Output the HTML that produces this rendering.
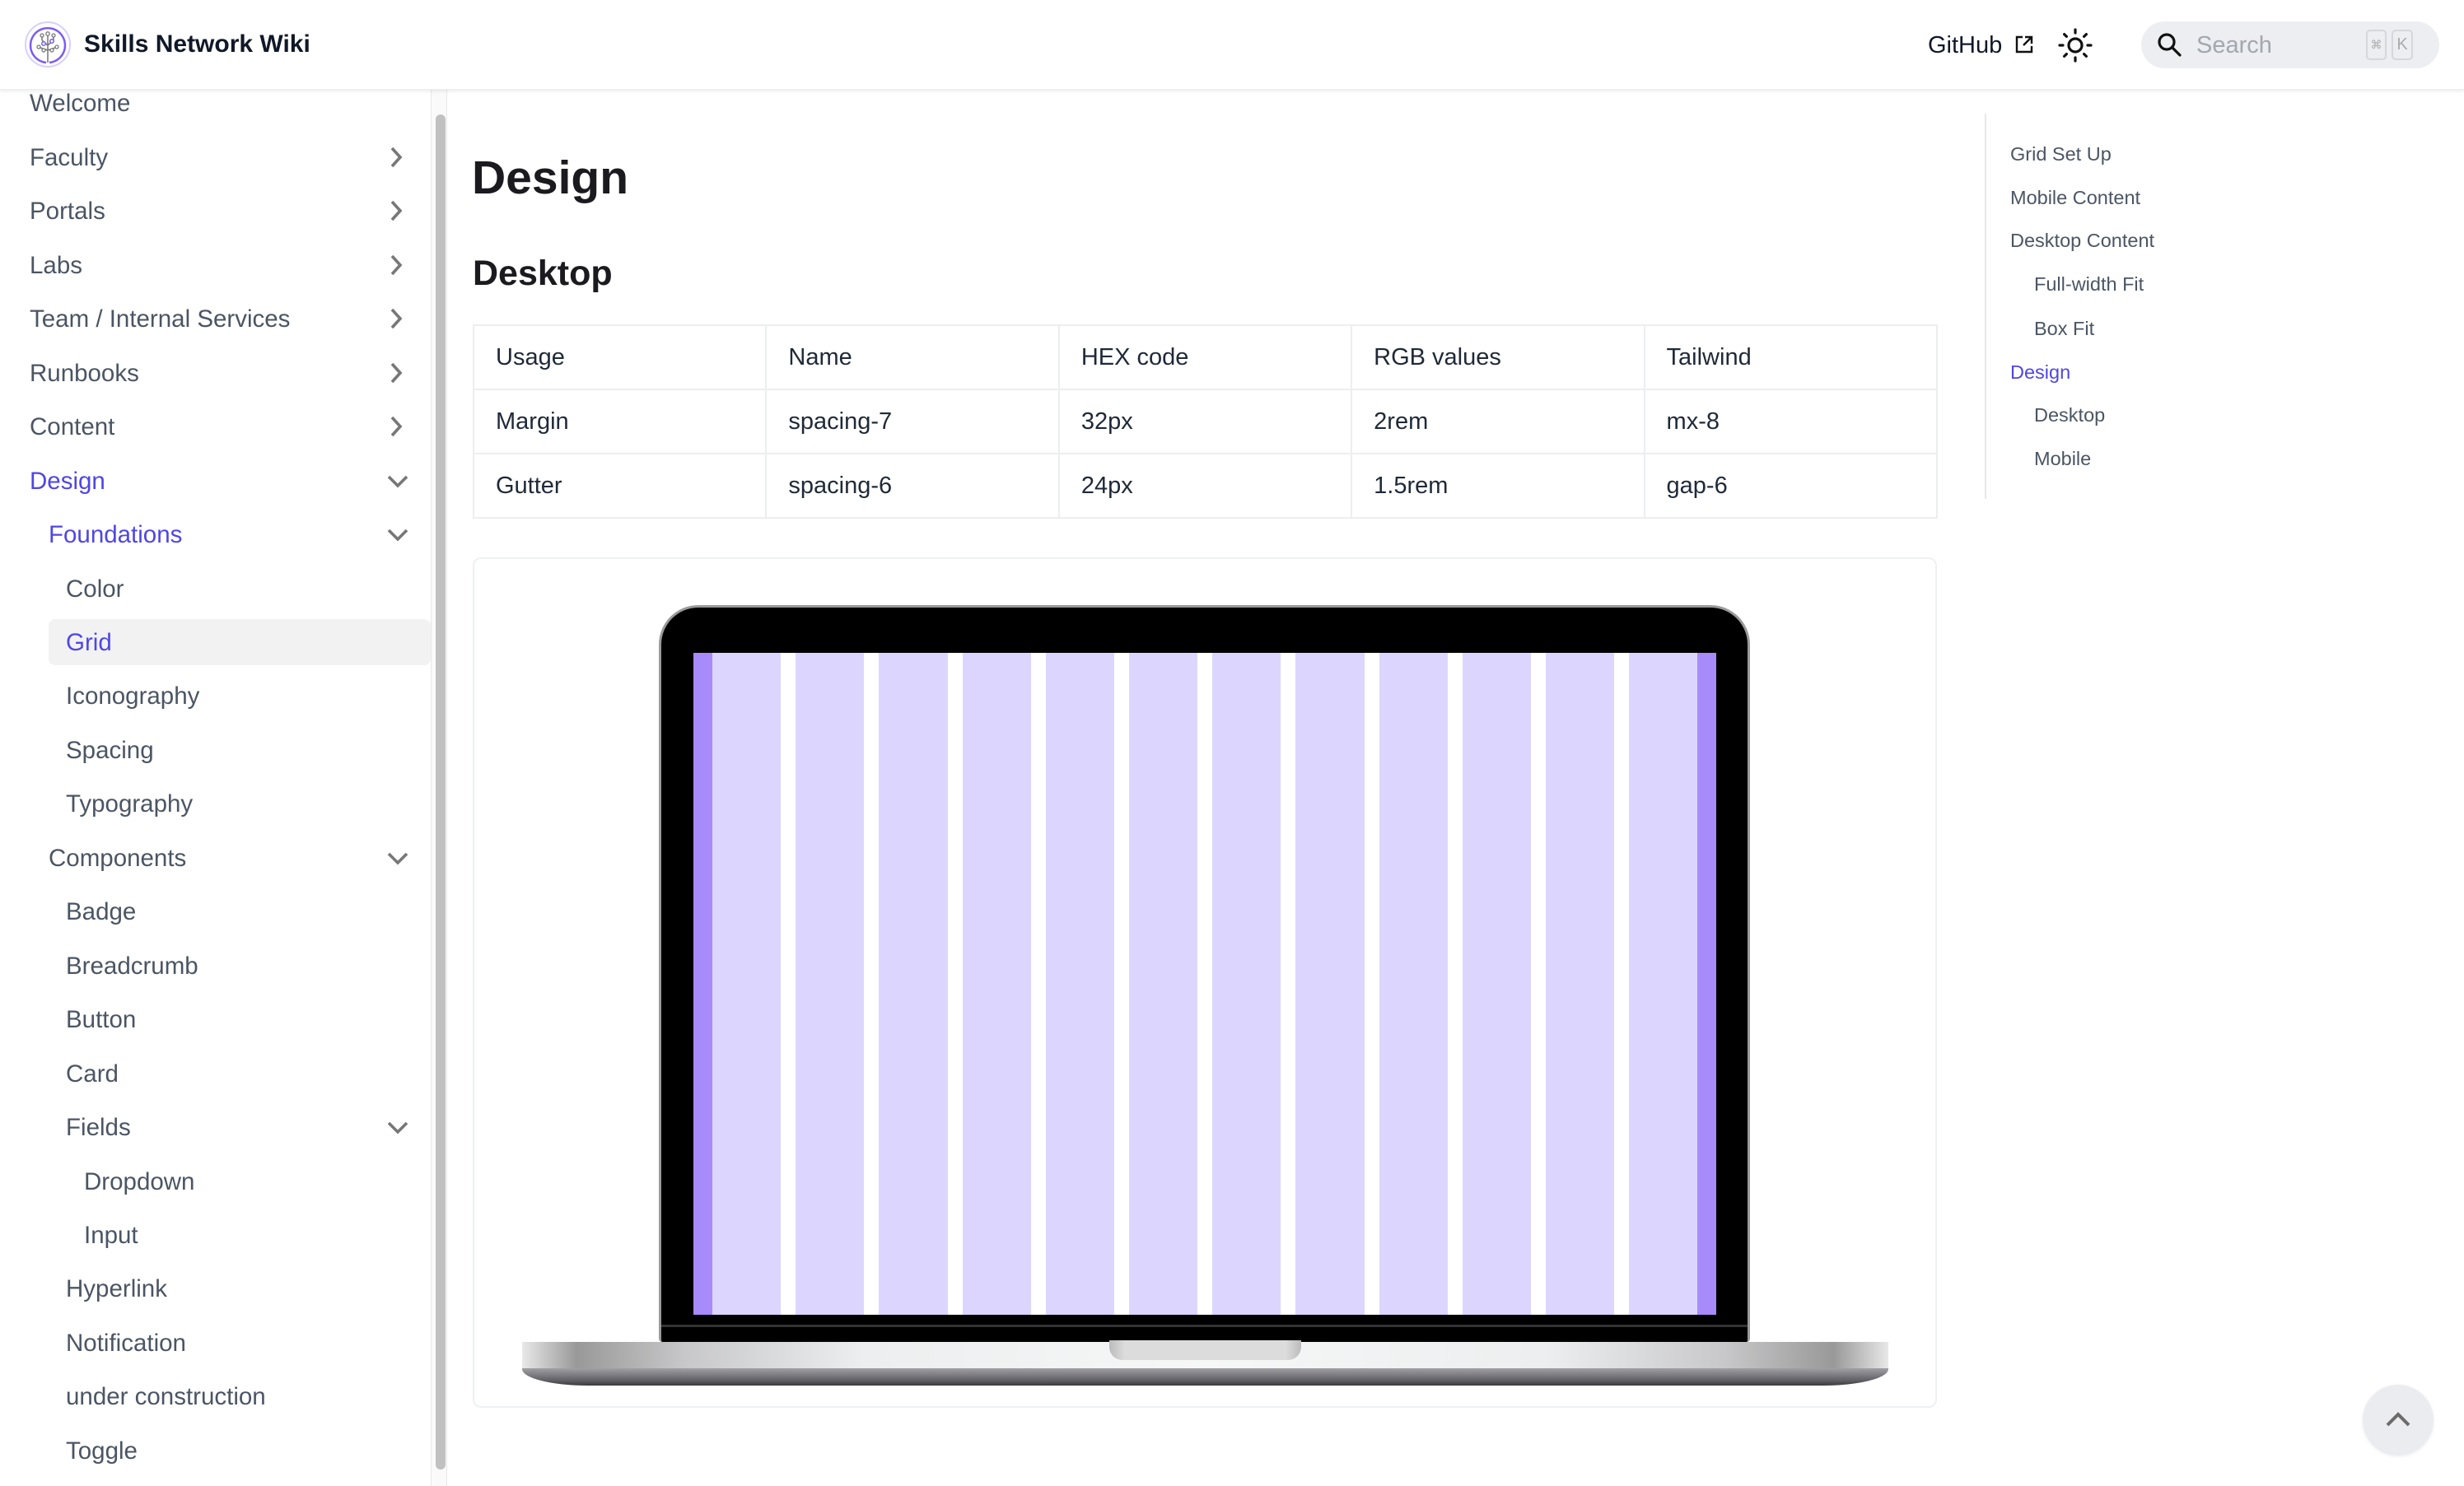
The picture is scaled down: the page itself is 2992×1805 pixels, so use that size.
<!DOCTYPE html>
<html><head><meta charset="utf-8">
<style>
*{margin:0;padding:0;box-sizing:border-box}
html,body{width:2992px;height:1805px;overflow:hidden;background:#fff;font-family:"Liberation Sans",sans-serif;position:relative}
.a{position:absolute}
.hdr{left:0;top:0;width:2992px;height:109px;background:#fff;box-shadow:0 2px 4px rgba(0,0,0,.08);border-bottom:1px solid #eceef1;z-index:5}
.nav div{position:absolute;font-size:29.5px;color:#4b5563;line-height:40px;height:40px;white-space:nowrap}
.nav svg{position:absolute}
.toc div{position:absolute;font-size:23.5px;color:#4b5563;line-height:30px;white-space:nowrap}
table{border-collapse:collapse;position:absolute;left:574px;top:394px;width:1779px;font-size:29px;color:#1f2937}
td{border:2px solid #eceef1;height:78px;padding-left:26px;vertical-align:middle;width:356px}
.col{position:absolute;top:793px;height:804px;width:83.2px;background:#dcd6fe}
</style></head><body>
<div class="a hdr">
  <svg class="a" style="left:29px;top:25px" width="58" height="58" viewBox="0 0 58 58">
    <circle cx="29" cy="29" r="27" fill="#fff" stroke="#d8d0fb" stroke-width="2"/>
    <path d="M27 51 A21 21 0 1 1 31 51" fill="none" stroke="#7c5cf0" stroke-width="2.5"/>
    <path d="M29 51V18M29 30l-7-6M29 30l7-6M29 36l-9-3M29 36l9-3M22 24v-5M36 24v-5" stroke="#777" stroke-width="1.5" fill="none"/>
    <g fill="#fff" stroke="#777" stroke-width="1.3"><circle cx="29" cy="16" r="2.2"/><circle cx="22" cy="18" r="2"/><circle cx="36" cy="18" r="2"/><circle cx="18" cy="32" r="2"/><circle cx="40" cy="32" r="2"/><circle cx="24" cy="36" r="2"/><circle cx="34" cy="36" r="2"/></g>
    <circle cx="34" cy="25" r="2.3" fill="#fff" stroke="#7c5cf0" stroke-width="1.5"/><circle cx="24" cy="28" r="2.3" fill="#fff" stroke="#7c5cf0" stroke-width="1.5"/>
  </svg>
  <div class="a" style="left:102px;top:34px;font-size:30px;font-weight:bold;color:#111827;line-height:40px">Skills Network Wiki</div>
  <div class="a" style="left:2341px;top:35px;font-size:29px;color:#111827;line-height:40px">GitHub</div>
  <svg class="a" style="left:2446px;top:42px" width="24" height="24" viewBox="0 0 24 24" fill="none" stroke="#111" stroke-width="2.4"><path d="M10 3H3v18h18v-7"/><path d="M13 3h8v8M21 3L11 13"/></svg>
  <svg class="a" style="left:2497px;top:32px" width="46" height="46" viewBox="0 0 46 46" fill="none" stroke="#111" stroke-width="3.2" stroke-linecap="round"><circle cx="23" cy="23" r="8"/><path d="M23 4v4M23 38v4M4 23h4M38 23h4M9.6 9.6l2.8 2.8M33.6 33.6l2.8 2.8M9.6 36.4l2.8-2.8M33.6 12.4l2.8-2.8"/></svg>
  <div class="a" style="left:2600px;top:26px;width:362px;height:57px;border-radius:29px;background:#eceef2"></div>
  <svg class="a" style="left:2618px;top:38px" width="34" height="34" viewBox="0 0 34 34" fill="none" stroke="#111" stroke-width="3.2" stroke-linecap="round"><circle cx="13" cy="13" r="9"/><path d="M20 20l9 9"/></svg>
  <div class="a" style="left:2667px;top:35px;font-size:29px;color:#a3a7ae;line-height:40px">Search</div>
  <div class="a" style="left:2873px;top:36px;width:25px;height:37px;border:2px solid #d5d7db;border-radius:5px;font-size:14px;color:#aaa;text-align:center;line-height:32px">⌘</div>
  <div class="a" style="left:2904px;top:36px;width:26px;height:37px;border:2px solid #d5d7db;border-radius:5px;font-size:20px;color:#aaa;text-align:center;line-height:32px">K</div>
</div>

<div class="a" style="left:59px;top:752px;width:464px;height:56px;background:#f2f2f2;border-radius:8px"></div>
<div class="a" style="left:523px;top:109px;width:20px;height:1696px;background:#fafafa;border-left:1px solid #e8e8e8;border-right:1px solid #e8e8e8"></div>
<div class="a" style="left:529px;top:139px;width:12px;height:1646px;background:#c1c1c1;border-radius:6px"></div>
<div class="nav">
<div style="left:36px;top:106px">Welcome</div>
<div style="left:36px;top:172px">Faculty</div>
<div style="left:36px;top:237px">Portals</div>
<div style="left:36px;top:303px">Labs</div>
<div style="left:36px;top:368px">Team / Internal Services</div>
<div style="left:36px;top:434px">Runbooks</div>
<div style="left:36px;top:499px">Content</div>
<div style="left:36px;top:565px;color:#4f46e5">Design</div>
<div style="left:59px;top:630px;color:#4f46e5">Foundations</div>
<div style="left:80px;top:696px">Color</div>
<div style="left:80px;top:761px;color:#4f46e5">Grid</div>
<div style="left:80px;top:826px">Iconography</div>
<div style="left:80px;top:892px">Spacing</div>
<div style="left:80px;top:957px">Typography</div>
<div style="left:59px;top:1023px">Components</div>
<div style="left:80px;top:1088px">Badge</div>
<div style="left:80px;top:1154px">Breadcrumb</div>
<div style="left:80px;top:1219px">Button</div>
<div style="left:80px;top:1285px">Card</div>
<div style="left:80px;top:1350px">Fields</div>
<div style="left:102px;top:1416px">Dropdown</div>
<div style="left:102px;top:1481px">Input</div>
<div style="left:80px;top:1546px">Hyperlink</div>
<div style="left:80px;top:1612px">Notification</div>
<div style="left:80px;top:1677px">under construction</div>
<div style="left:80px;top:1743px">Toggle</div>
</div>
<svg class="a" style="left:0;top:0" width="523" height="1805" fill="none" stroke="#777" stroke-width="3.6">
<path d="M476 180l10 11-10 11M476 245l10 11-10 11M476 311l10 11-10 11M476 376l10 11-10 11M476 442l10 11-10 11M476 507l10 11-10 11"/>
<path d="M472 579l11 11 11-11M472 644l11 11 11-11M472 1037l11 11 11-11M472 1364l11 11 11-11"/>
</svg>

<div class="a" style="left:573px;top:180px;font-size:57px;font-weight:bold;color:#1a1a1f;line-height:72px">Design</div>
<div class="a" style="left:574px;top:305px;font-size:43px;font-weight:bold;color:#1a1a1f;line-height:54px">Desktop</div>
<table>
<tr><td>Usage</td><td>Name</td><td>HEX code</td><td>RGB values</td><td>Tailwind</td></tr>
<tr><td>Margin</td><td>spacing-7</td><td>32px</td><td>2rem</td><td>mx-8</td></tr>
<tr><td>Gutter</td><td>spacing-6</td><td>24px</td><td>1.5rem</td><td>gap-6</td></tr>
</table>

<div class="a" style="left:574px;top:677px;width:1778px;height:1033px;border:2px solid #eef0f2;border-radius:10px"></div>
<div class="a" style="left:800px;top:735px;width:1325px;height:895px;background:#000;border-radius:48px 48px 4px 4px;border:3px solid #9a9a9a;border-bottom:none"></div>
<div class="a" style="left:803px;top:1609px;width:1319px;height:3px;background:#333"></div>
<div class="a" style="left:842px;top:793px;width:1242px;height:804px;background:#fff"></div>
<div class="a" style="left:842px;top:793px;width:23px;height:804px;background:#a78bfa"></div>
<div class="a" style="left:2061px;top:793px;width:23px;height:804px;background:#a78bfa"></div>
<div class="col" style="left:865px"></div><div class="col" style="left:966.2px"></div><div class="col" style="left:1067.4px"></div><div class="col" style="left:1168.6px"></div><div class="col" style="left:1269.8px"></div><div class="col" style="left:1371px"></div><div class="col" style="left:1472.2px"></div><div class="col" style="left:1573.4px"></div><div class="col" style="left:1674.6px"></div><div class="col" style="left:1775.8px"></div><div class="col" style="left:1877px"></div><div class="col" style="left:1978.2px"></div>
<div class="a" style="left:634px;top:1630px;width:1659px;height:32px;background:linear-gradient(90deg,#e8e8e8 0%,#999 4%,#c8c8ca 12%,#eceeef 25%,#f6f7f7 50%,#eceeef 75%,#c8c8ca 88%,#999 96%,#e8e8e8 100%)"></div>
<div class="a" style="left:634px;top:1662px;width:1659px;height:21px;background:linear-gradient(#a0a0a5,#606065 70%,#3a3a3d);border-radius:0 0 80px 80px/0 0 20px 20px"></div>
<div class="a" style="left:1347px;top:1628px;width:233px;height:24px;background:linear-gradient(90deg,#bbb,#dcdcdc 8%,#dcdcdc 92%,#bbb);border-radius:0 0 16px 16px"></div>

<div class="a" style="left:2410px;top:138px;width:2px;height:468px;background:#e6e7ea"></div>
<div class="toc">
<div style="left:2441px;top:172px">Grid Set Up</div>
<div style="left:2441px;top:225px">Mobile Content</div>
<div style="left:2441px;top:277px">Desktop Content</div>
<div style="left:2470px;top:330px">Full-width Fit</div>
<div style="left:2470px;top:384px">Box Fit</div>
<div style="left:2441px;top:437px;color:#4f46e5">Design</div>
<div style="left:2470px;top:489px">Desktop</div>
<div style="left:2470px;top:542px">Mobile</div>
</div>

<div class="a" style="left:2869px;top:1682px;width:86px;height:86px;border-radius:50%;background:#ebecf0;box-shadow:0 1px 4px rgba(0,0,0,.08)"></div>
<svg class="a" style="left:2896px;top:1710px" width="32" height="30" fill="none" stroke="#6b6b6b" stroke-width="4"><path d="M3 21l13-13 13 13"/></svg>
</body></html>
